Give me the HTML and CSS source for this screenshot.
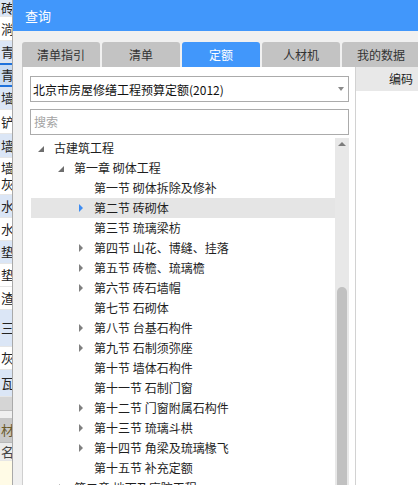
FILE: index.html
```html
<!DOCTYPE html>
<html lang="zh">
<head>
<meta charset="utf-8">
<title>查询</title>
<link rel="stylesheet" href="styles.css">
</head>
<body>
<div class="strip">
  <div class="cell blue h17">砖</div>
  <div class="cell h24">淌</div>
  <div class="cell blue h22">青</div>
  <div class="cell sel h24">青</div>
  <div class="cell blue h23">墙</div>
  <div class="cell h24">铲</div>
  <div class="cell blue h24">墙</div>
  <div class="cell two h37">墙<br>灰</div>
  <div class="cell blue h23">水</div>
  <div class="cell h23">水</div>
  <div class="cell blue h23">垫</div>
  <div class="cell h23">垫</div>
  <div class="cell h23">渣</div>
  <div class="cell blue h37">三</div>
  <div class="cell h23">灰</div>
  <div class="cell blue h27">瓦</div>
  <div class="cell gray h14"></div>
  <div class="cell light h7"></div>
  <div class="cell head h25">材</div>
  <div class="cell sub h18">名</div>
  <div class="cell yellow fill"></div>
</div>

<div class="dlg">
  <div class="title">查询</div>
  <div class="dbody">
    <div class="tabs">
      <div class="tab">清单指引</div>
      <div class="tab">清单</div>
      <div class="tab on">定额</div>
      <div class="tab">人材机</div>
      <div class="tab">我的数据</div>
    </div>
    <div class="panels">
      <div class="left">
        <div class="select"><span>北京市房屋修缮工程预算定额(2012)</span><i class="caret"></i></div>
        <div class="search">搜索</div>
        <div class="tree">
          <div class="rows">
            <div class="row l0"><span class="tw exp"></span><span class="tx">古建筑工程</span></div>
            <div class="row l1"><span class="tw exp"></span><span class="tx">第一章 砌体工程</span></div>
            <div class="row l2"><span class="tw"></span><span class="tx">第一节 砌体拆除及修补</span></div>
            <div class="row l2 cur"><span class="tw col"></span><span class="tx">第二节 砖砌体</span></div>
            <div class="row l2"><span class="tw"></span><span class="tx">第三节 琉璃梁枋</span></div>
            <div class="row l2"><span class="tw col"></span><span class="tx">第四节 山花、博缝、挂落</span></div>
            <div class="row l2"><span class="tw col"></span><span class="tx">第五节 砖檐、琉璃檐</span></div>
            <div class="row l2"><span class="tw col"></span><span class="tx">第六节 砖石墙帽</span></div>
            <div class="row l2"><span class="tw"></span><span class="tx">第七节 石砌体</span></div>
            <div class="row l2"><span class="tw col"></span><span class="tx">第八节 台基石构件</span></div>
            <div class="row l2"><span class="tw col"></span><span class="tx">第九节 石制须弥座</span></div>
            <div class="row l2"><span class="tw"></span><span class="tx">第十节 墙体石构件</span></div>
            <div class="row l2"><span class="tw"></span><span class="tx">第十一节 石制门窗</span></div>
            <div class="row l2"><span class="tw col"></span><span class="tx">第十二节 门窗附属石构件</span></div>
            <div class="row l2"><span class="tw col"></span><span class="tx">第十三节 琉璃斗栱</span></div>
            <div class="row l2"><span class="tw col"></span><span class="tx">第十四节 角梁及琉璃椽飞</span></div>
            <div class="row l2"><span class="tw"></span><span class="tx">第十五节 补充定额</span></div>
            <div class="row l1"><span class="tw col"></span><span class="tx">第二章 地面及庭院工程</span></div>
          </div>
          <div class="vscroll">
            <i class="up"></i>
            <div class="thumb"></div>
          </div>
        </div>
      </div>
      <div class="right">
        <div class="rhead">编码</div>
      </div>
    </div>
  </div>
</div>
</body>
</html>
```

FILE: styles.css
```css
* { box-sizing: border-box; }
html, body { margin: 0; height: 485px; overflow: hidden; }
body {
  width: 418px;
  display: flex;
  font-family: "Noto Sans CJK SC", "Microsoft YaHei", sans-serif;
  font-size: 12px;
  color: #1e1e1e;
  background: #fff;
}

/* background table strip */
.strip {
  width: 13px;
  flex: none;
  border-right: 1px solid #a9a9a9;
  display: flex;
  flex-direction: column;
  overflow: hidden;
}
.cell {
  flex: none;
  display: flex;
  align-items: center;
  padding-left: 1px;
  font-size: 13px;
  line-height: 16px;
  color: #222;
  background: #fff;
  border-bottom: 1px solid #e6e6e6;
  overflow: hidden;
  white-space: nowrap;
}
.cell.two { white-space: normal; }
.cell.blue { background: #dbe6f6; }
.cell.sel { background: #c9dcf3; border-top: 2px solid #1e72dc; border-bottom: 2px solid #1e72dc; }
.cell.gray { background: #d5d5d5; border-bottom: 1px solid #bdbdbd; }
.cell.light { background: #f0f0f0; border-bottom: 0; }
.cell.head { background: #c8c8c8; color: #6a5a2a; border-bottom: 1px solid #b9b9b9; }
.cell.sub { background: #ececec; color: #444; }
.cell.yellow { background: #fffbe6; border-bottom: 0; }
.cell.fill { flex: 1; }
.h7 { height: 7px; }
.h14 { height: 14px; }
.h17 { height: 17px; }
.h18 { height: 18px; }
.h22 { height: 22px; }
.h23 { height: 23px; }
.h24 { height: 24px; }
.h25 { height: 25px; }
.h27 { height: 27px; }
.h37 { height: 37px; }

/* dialog */
.dlg {
  flex: 1;
  min-width: 0;
  display: flex;
  flex-direction: column;
  background: #f0f0f0;
}
.title {
  height: 31px;
  flex: none;
  background: #4197fb;
  color: #fff;
  font-size: 13px;
  line-height: 31px;
  padding-left: 12px;
}
.dbody {
  flex: 1;
  min-height: 0;
  display: flex;
  flex-direction: column;
  padding: 11px 0 0 9px;
}
.tabs {
  display: flex;
  gap: 2px;
  height: 25px;
  flex: none;
}
.tab {
  width: 78px;
  flex: none;
  background: #c3c3c3;
  border-radius: 3px 3px 0 0;
  text-align: center;
  line-height: 25px;
  color: #333;
}
.tab.on { background: #4197fb; color: #fff; }

.panels {
  flex: 1;
  min-height: 0;
  display: flex;
}
.left {
  width: 333px;
  flex: none;
  background: #fff;
  border-left: 1px solid #cfcfcf;
  padding: 9px 6px 0 7px;
  display: flex;
  flex-direction: column;
}
.select {
  height: 26px;
  flex: none;
  border: 1px solid #ababab;
  display: flex;
  align-items: center;
  padding-left: 2px;
  color: #111;
}
.caret {
  margin-left: auto;
  margin-right: 4px;
  width: 0;
  height: 0;
  border-left: 3.5px solid transparent;
  border-right: 3.5px solid transparent;
  border-top: 4px solid #8a8a8a;
}
.search {
  margin-top: 7px;
  height: 26px;
  flex: none;
  border: 1px solid #ababab;
  color: #a3a3a3;
  padding-left: 3px;
  line-height: 24px;
}

.tree {
  margin-top: 3px;
  margin-left: 1px;
  flex: 1;
  min-height: 0;
  display: flex;
  overflow: hidden;
}
.rows { flex: 1; min-width: 0; }
.row {
  height: 20px;
  display: flex;
  align-items: center;
  white-space: nowrap;
  line-height: 20px;
}
.row.cur { background: #e5e5e5; }
.row.l1 { padding-left: 20px; }
.row.l2 { padding-left: 40px; }
.tw {
  width: 20px;
  height: 20px;
  flex: none;
  position: relative;
}
.tw.exp::after {
  content: "";
  position: absolute;
  left: 7px;
  top: 8px;
  width: 0;
  height: 0;
  border-left: 6px solid transparent;
  border-bottom: 6px solid #6e6e6e;
}
.tw.col::after {
  content: "";
  position: absolute;
  left: 8px;
  top: 6px;
  width: 0;
  height: 0;
  border-top: 4px solid transparent;
  border-bottom: 4px solid transparent;
  border-left: 4.5px solid #808080;
}
.row.cur .tw.col::after { border-left-color: #3d8cf2; }
.tx { margin-left: 3px; }

.vscroll {
  width: 14px;
  flex: none;
  background: #e8e8e8;
  display: flex;
  flex-direction: column;
  align-items: center;
}
.up {
  margin-top: 4px;
  width: 0;
  height: 0;
  border-left: 4px solid transparent;
  border-right: 4px solid transparent;
  border-bottom: 4px solid #7c7c7c;
}
.thumb {
  margin-top: 141px;
  width: 10px;
  flex: 1;
  background: #c1c1c1;
  border-radius: 5px 5px 0 0;
}

.right {
  flex: 1;
  min-width: 0;
  background: #fff;
  border-left: 1px solid #d2d2d2;
}
.rhead {
  height: 24px;
  background: #e8e8e8;
  line-height: 24px;
  padding-left: 33px;
  color: #222;
}
```
